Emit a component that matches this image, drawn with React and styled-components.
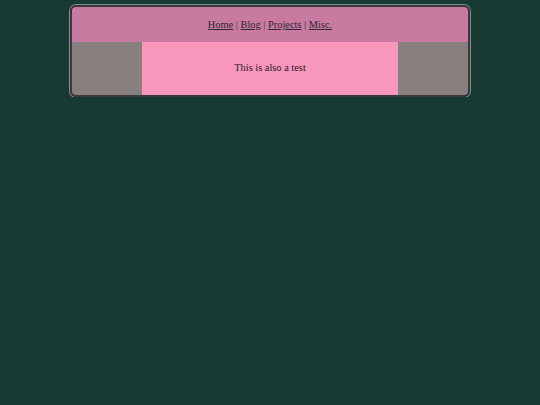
import React from 'react';
import styled, { createGlobalStyle } from 'styled-components';

const GlobalStyle = createGlobalStyle`
  html, body {
    margin: 0;
    padding: 0;
    background: #173a33;
    font-family: "Liberation Serif", "Times New Roman", serif;
  }
`;

const Page = styled.div`
  padding-top: 5px;
`;

const Frame = styled.div`
  box-sizing: border-box;
  width: 400px;
  margin: 0 auto;
  border: 2px solid #3b3640;
  border-radius: 6px;
  box-shadow: 0 0 0 1px #8b8b8b;
  overflow: hidden;
`;

const Header = styled.div`
  height: 35px;
  background: #c87aa0;
  display: flex;
  align-items: center;
  justify-content: center;
  font-size: 10.4px;
  color: #333;
`;

const NavLink = styled.a`
  color: #2e2536;
  text-decoration: underline;
`;

const Row = styled.div`
  display: flex;
  height: 53px;
`;

const Side = styled.div`
  width: 70px;
  background: #87807f;
`;

const Main = styled.div`
  flex: 1;
  background: #f996bb;
  display: flex;
  align-items: center;
  justify-content: center;
  font-size: 10.4px;
  color: #2a2228;
  padding-bottom: 3px;
`;

const links = ['Home', 'Blog', 'Projects', 'Misc.'];

export default function App() {
  return (
    <>
      <GlobalStyle />
      <Page>
        <Frame>
          <Header>
            {links.map((l, i) => (
              <React.Fragment key={l}>
                {i > 0 && <span>&nbsp;|&nbsp;</span>}
                <NavLink href="#">{l}</NavLink>
              </React.Fragment>
            ))}
          </Header>
          <Row>
            <Side />
            <Main>This is also a test</Main>
            <Side />
          </Row>
        </Frame>
      </Page>
    </>
  );
}
